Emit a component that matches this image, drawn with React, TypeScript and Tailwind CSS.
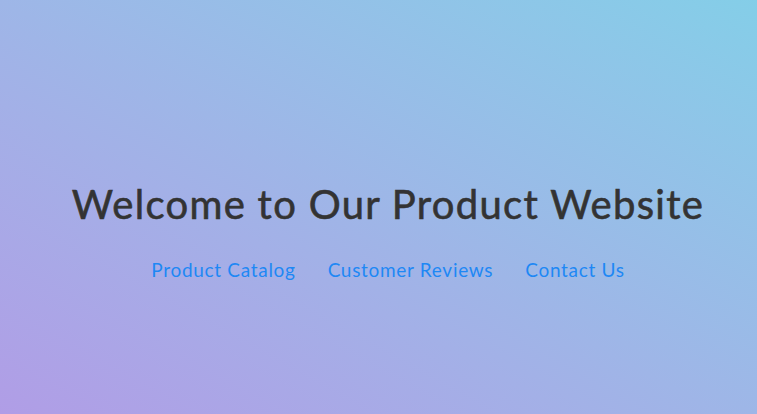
export default function App() {
  const links = ["Product Catalog", "Customer Reviews", "Contact Us"];
  return (
    <div
      className="h-screen w-full bg-linear-to-tr from-[#b09de6] to-[#84cee8] flex flex-col items-center pl-[19px] pt-[178px]"
      style={{ fontFamily: "Lato, 'Open Sans', sans-serif" }}
    >
      <h1 className="text-[40px] leading-[52px] tracking-[1.3px] text-[#333333] [-webkit-text-stroke:0.6px_#333333]">
        Welcome to Our Product Website
      </h1>
      <nav className="mt-[28px] flex gap-8">
        {links.map((l) => (
          <a key={l} href="#" className="text-[19px] leading-6 tracking-[0.7px] text-[#1e88f5]">
            {l}
          </a>
        ))}
      </nav>
    </div>
  );
}
